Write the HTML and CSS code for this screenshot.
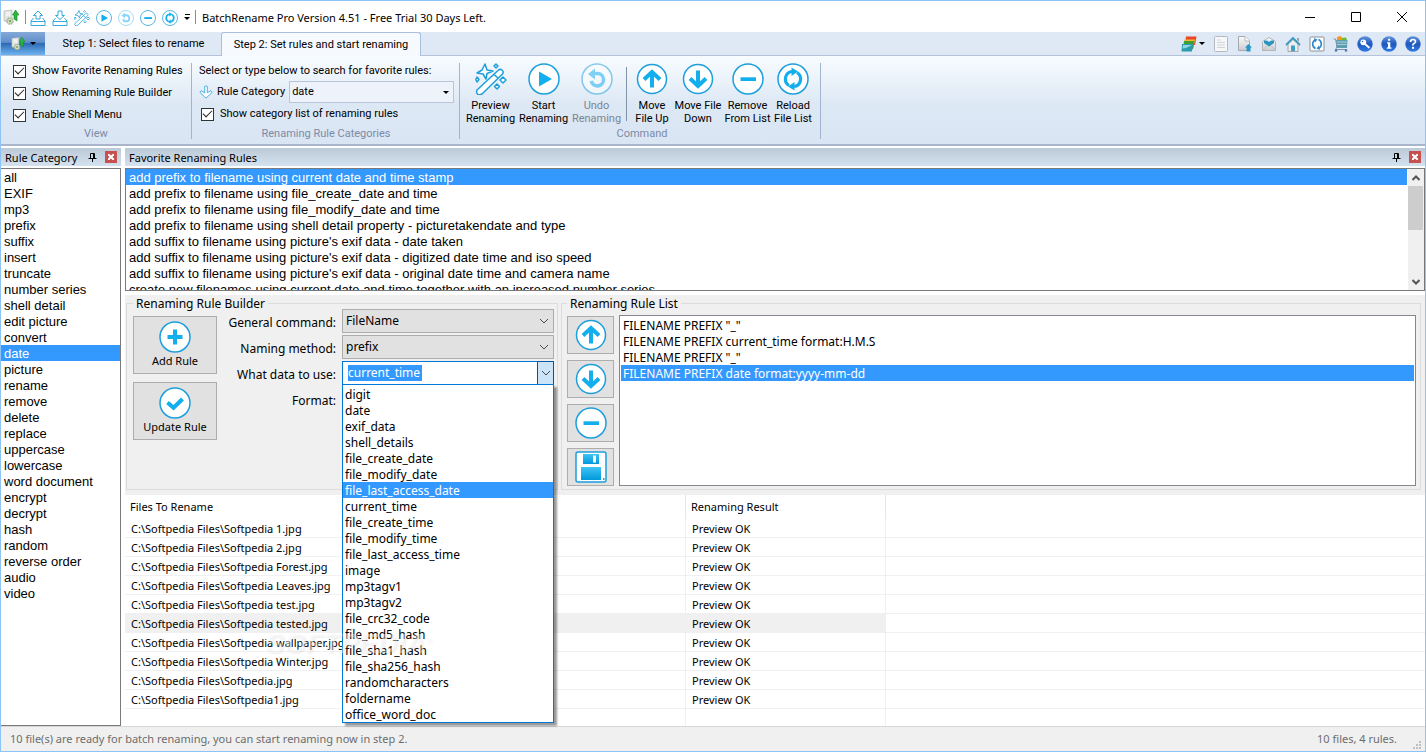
FILE: index.html
```html
<!DOCTYPE html>
<html lang="en">
<head>
  <meta charset="UTF-8" />
  <meta name="viewport" content="width=device-width, initial-scale=1.0" />
  <title>BatchRename Pro Version 4.51</title>
  <link rel="stylesheet" href="styles.css">
</head>
<body>
  <svg class="sprite" width="0" height="0" aria-hidden="true">
    <defs>
      <linearGradient id="g-sky" x1="0" y1="0" x2="0" y2="1"><stop offset="0" stop-color="#3fc4f5" /><stop offset="1" stop-color="#0098dc" /></linearGradient>
      <linearGradient id="g-blue" x1="0" y1="0" x2="0" y2="1"><stop offset="0" stop-color="#5f93dd" /><stop offset="0.5" stop-color="#1f58bd" /><stop offset="1" stop-color="#2f7be8" /></linearGradient>
      <linearGradient id="g-grey" x1="0" y1="0" x2="0" y2="1"><stop offset="0" stop-color="#fbfbfb" /><stop offset="1" stop-color="#c9ccd0" /></linearGradient>
    </defs>
    <symbol id="i-play" viewBox="0 0 32 32"><circle cx="16" cy="16" r="15" fill="#fff" stroke="#1d9fdc" stroke-width="1.5" /><path d="M11 8.500L24 16L11 23.500Z" fill="#12aeee" /></symbol>
    <symbol id="i-undo" viewBox="0 0 32 32"><circle cx="16" cy="16" r="15" fill="#fff" stroke="#1d9fdc" stroke-width="1.500" /><path d="M12.500 10.500H16.500A6.200 6.200 0 1 1 10.300 18" fill="none" stroke="#12aeee" stroke-width="3.600" /><path d="M7 11L14 5.500V16.500Z" fill="#12aeee" /></symbol>
    <symbol id="i-minus" viewBox="0 0 32 32"><circle cx="16" cy="16" r="15" fill="#fff" stroke="#1d9fdc" stroke-width="1.500" /><path d="M8.500 14.300H24V18H8.500Z" fill="#12aeee" /></symbol>
    <symbol id="i-plus" viewBox="0 0 32 32"><circle cx="16" cy="16" r="15" fill="#fff" stroke="#1d9fdc" stroke-width="1.500" /><path d="M14 8.500H18V14H23.500V18H18V23.500H14V18H8.500V14H14Z" fill="#12aeee" /></symbol>
    <symbol id="i-check" viewBox="0 0 32 32"><circle cx="16" cy="16" r="15" fill="#fff" stroke="#1d9fdc" stroke-width="1.500" /><path d="M8.500 15.500L14.500 20.800L23.500 12" fill="none" stroke="#12aeee" stroke-width="4" /></symbol>
    <symbol id="i-up" viewBox="0 0 32 32"><circle cx="16" cy="16" r="14.500" fill="#fff" stroke="#1d9fdc" stroke-width="1.500" /><path d="M16 24.500V10M8 16.500L16 9L24 16.500" fill="none" stroke="#12aeee" stroke-width="4" /></symbol>
    <symbol id="i-down" viewBox="0 0 32 32"><circle cx="16" cy="16" r="14.500" fill="#fff" stroke="#1d9fdc" stroke-width="1.500" /><path d="M16 7.500V22M8 15.500L16 23L24 15.500" fill="none" stroke="#12aeee" stroke-width="4" /></symbol>
    <symbol id="i-reload" viewBox="0 0 32 32"><circle cx="16" cy="16" r="15" fill="#fff" stroke="#1d9fdc" stroke-width="1.500" /><path d="M12 22.500A7.600 7.600 0 0 1 15 8.500M20 9.500A7.600 7.600 0 0 1 17 23.500" fill="none" stroke="#12aeee" stroke-width="3.200" /><path d="M14.500 4.500L21 8.500L14.500 13ZM17.500 19L11 23.500L17.500 27.500Z" fill="#12aeee" /></symbol>
    <symbol id="i-wand" viewBox="0 0 32 32">
      <g fill="#fff" stroke="#1d9fdc" stroke-width="1.500" stroke-linejoin="round">
        <path d="M2 27L23 7.500Q25 5.500 27 7T27.500 11L7 31Q4 32.500 2.500 31T2 27ZM19 11.500L23.500 15.500" />
        <path d="M10 1L12 7L18 8L12 10.500L11 16L8 11L2 10L7 7Z" />
        <path d="M21 1L23 3L21 5L19 3ZM2 14L4 16.500L2 19L0.800 16.500ZM28 14L31 17L28 20L25 17ZM22 21L24.500 23.500L22 26L19.500 23.500Z" />
      </g>
    </symbol>
    <symbol id="i-tray-up" viewBox="0 0 16 16"><path d="M3.500 8L1 11V15.500H15V11L12.500 8M1 11.500H15M8 1L3.500 5.500H6V9H10V5.500H12.500Z" fill="#fff" stroke="#35a8de" stroke-linejoin="round" /></symbol>
    <symbol id="i-tray-down" viewBox="0 0 16 16"><path d="M3.500 8L1 11V15.500H15V11L12.500 8M1 11.500H15M8 9.500L3.500 5.500H6V1H10V5.500H12.500Z" fill="#fff" stroke="#35a8de" stroke-linejoin="round" /></symbol>
    <symbol id="i-hollow-down" viewBox="0 0 16 16"><path d="M8 15L1 8.500L2.500 6.500L6.500 9V1.500Q8 0.500 9.500 1.500V9L13.500 6.500L15 8.500Z" fill="#fff" stroke="#35a8de" stroke-linejoin="round" /></symbol>
    <symbol id="i-save" viewBox="0 0 32 32"><rect x="1" y="1" width="30" height="30" rx="2" fill="#fff" stroke="#1d9fdc" stroke-width="1.500" /><path d="M8 3H24V13H8Z" fill="url(#g-sky)" /><path d="M18 4.500H21V11.500H18Z" fill="#fff" /><rect x="6" y="16" width="20" height="13" fill="url(#g-sky)" /><path d="M28 27H29.500V29H28Z" fill="#1d9fdc" /></symbol>
    <symbol id="i-app" viewBox="0 0 16 16"><path d="M1 2L9 1V14L1 12Z" fill="#e3e6e4" stroke="#a9adaa" stroke-width="0.600" /><path d="M3 4H7M3 6H7" stroke="#fff" /><circle cx="7" cy="12" r="3" fill="#d8e4c9" stroke="#9bb18b" stroke-width="1.500" stroke-dasharray="1.600 0.700" /><circle cx="7" cy="12" r="1.200" fill="#7aa35f" /><path d="M12.500 1L16 6H14V12L11 10V6H9.500Z" fill="#28b93a" stroke="#13822a" stroke-width="0.600" /></symbol>
    <symbol id="i-pin" viewBox="0 0 9 9"><path d="M2.500 0.500H6.500V5.500H2.500ZM5.500 0.500V5.500M0.500 5.500H8.500M4.500 5.500V9" fill="none" stroke="#000" /></symbol>
    <symbol id="i-chevron" viewBox="0 0 10 10"><path d="M1 3L5 7L9 3" fill="none" stroke="#4a4a4a" /></symbol>
    <symbol id="i-layers" viewBox="0 0 16 16"><path d="M5 0.500H15.500L14 9H4Z" fill="#e8472b" /><path d="M3.500 3.500H14L12.500 12H2.500Z" fill="#f2b632" /><path d="M3 5H13.500L12 13H2Z" fill="#3e9f35" /><path d="M1 8H12L11 15.500H0.500Z" fill="#2b9cae" /><path d="M2 9H11L5 12L1.500 12.500Z" fill="#8ed6e0" /></symbol>
    <symbol id="i-sheet" viewBox="0 0 16 16"><rect x="1.500" y="0.500" width="13" height="15" rx="1" fill="#f6f7f8" stroke="#b5bac0" /><path d="M4 4H8M4 6.500H12M4 9H12M4 11.500H12" stroke="#ced5dc" /></symbol>
    <symbol id="i-export" viewBox="0 0 16 16"><path d="M1.500 0.500H8L12.500 5V14.500H1.500Z" fill="url(#g-grey)" stroke="#a6a9ad" /><path d="M8 0.500V5H12.500" fill="#fff" stroke="#b6b9bc" /><path d="M11.500 8L15 11.500H13.500V15.500H9.500V11.500H8Z" fill="#2597c9" /></symbol>
    <symbol id="i-mail" viewBox="0 0 16 16"><path d="M1.500 5.500L8 1.500L14.500 5.500V14.500H1.500Z" fill="url(#g-grey)" stroke="#b3b5b8" /><path d="M3 4.500H13V7L8 10.500L3 7Z" fill="#2b93c0" /><path d="M5 4H11L8 6Z" fill="#d6edf7" /><path d="M2 14L6 9.500M14 14L10 9.500" stroke="#b5b8bb" stroke-width="0.700" /></symbol>
    <symbol id="i-home" viewBox="0 0 16 16"><path d="M3 8L8 3.500L13 8V15.500H3Z" fill="#eceef0" stroke="#a2a6aa" /><path d="M6 9.500H10V15H6Z" fill="#3ea0c8" /><path d="M1 9L8 2L15 9" fill="none" stroke="#3b9ac2" stroke-width="1.800" /><path d="M12 2H14V6L12 4Z" fill="#9ca2a8" /></symbol>
    <symbol id="i-refresh" viewBox="0 0 16 16"><rect x="1" y="1" width="14" height="14" rx="1" fill="#fff" stroke="#8c9299" /><path d="M6.500 12.500A4.800 4.800 0 0 1 6 4M9.500 3.500A4.800 4.800 0 0 1 10 12" fill="none" stroke="#2f86cc" stroke-width="1.600" /><path d="M5 2L8.500 3.500L6 6.500ZM11 14L7.500 12.500L10 9.500Z" fill="#2f86cc" /></symbol>
    <symbol id="i-cart" viewBox="0 0 16 16"><path d="M4 1L7 0L9 1V4H4Z" fill="#f59a18" /><path d="M9 2L13 1.500L14 4H9Z" fill="#69bd30" /><path d="M3 4H14.500L14 12H3.500Z" fill="#5d9fae" /><path d="M3.500 6H14M4 8.500H13.500" stroke="#a6d1d8" /><path d="M0.500 3H2.500L4 11L2.500 13.500H14" fill="none" stroke="#7c93ab" /><circle cx="3" cy="14.500" r="1.300" fill="#547bb0" /><circle cx="13" cy="14.500" r="1.300" fill="#547bb0" /></symbol>
    <symbol id="i-key" viewBox="0 0 16 16"><circle cx="8" cy="8" r="7.700" fill="url(#g-blue)" /><circle cx="6.300" cy="6.300" r="2.900" fill="#fff" /><circle cx="5.500" cy="5.500" r="0.800" fill="#2a5fb8" /><path d="M8 8L12.500 12" stroke="#fff" stroke-width="1.800" /></symbol>
    <symbol id="i-info" viewBox="0 0 16 16"><circle cx="8" cy="8" r="7.700" fill="url(#g-blue)" /><path d="M7 2.700H9.200V4.700H7ZM6 6.200H9.300V11.500H10.500V12.800H5.800V11.500H7V7.500H6Z" fill="#fff" /></symbol>
    <symbol id="i-help" viewBox="0 0 16 16"><circle cx="8" cy="8" r="7.700" fill="url(#g-blue)" /><path d="M5.500 6Q5.500 3.500 8 3.500T10.500 5.500Q10.500 6.800 9 7.500T8 9.500" fill="none" stroke="#fff" stroke-width="1.700" /><path d="M7 10.800H9.100V12.800H7Z" fill="#fff" /></symbol>
  </svg>

  <div class="window">
    <header class="titlebar">
      <svg class="app-icon"><use href="#i-app" /></svg>
      <span class="bar-line"></span>
      <div class="quick">
        <button aria-label="Add files"><svg><use href="#i-tray-up" /></svg></button>
        <button aria-label="Add folder"><svg><use href="#i-tray-down" /></svg></button>
        <button aria-label="Preview"><svg><use href="#i-wand" /></svg></button>
        <button aria-label="Start"><svg><use href="#i-play" /></svg></button>
        <button aria-label="Undo" disabled><svg><use href="#i-undo" /></svg></button>
        <button aria-label="Remove"><svg><use href="#i-minus" /></svg></button>
        <button aria-label="Reload"><svg><use href="#i-reload" /></svg></button>
      </div>
      <button class="more" aria-label="Customize toolbar"><span class="more-bar"></span><span class="arrow"></span></button>
      <span class="bar-line"></span>
      <h1>BatchRename Pro Version 4.51 - Free Trial 30 Days Left.</h1>
      <div class="win-buttons">
        <button aria-label="Minimize"><svg viewBox="0 0 10 10"><path d="M0 5.500H10" /></svg></button>
        <button aria-label="Maximize"><svg viewBox="0 0 10 10"><path d="M0.500 0.500H9.500V9.500H0.500Z" /></svg></button>
        <button aria-label="Close"><svg viewBox="0 0 10 10"><path d="M0 0L10 10M10 0L0 10" /></svg></button>
      </div>
    </header>

    <nav class="tabs">
      <button class="app-menu" aria-label="Application menu"><svg><use href="#i-app" /></svg><span class="arrow"></span></button>
      <button class="tab">Step 1: Select files to rename</button>
      <button class="tab active">Step 2: Set rules and start renaming</button>
      <div class="tools">
        <button class="skin" aria-label="Skins"><svg><use href="#i-layers" /></svg><span class="arrow"></span></button>
        <button aria-label="Log"><svg><use href="#i-sheet" /></svg></button>
        <button aria-label="Export"><svg><use href="#i-export" /></svg></button>
        <button aria-label="Mail"><svg><use href="#i-mail" /></svg></button>
        <button aria-label="Home"><svg><use href="#i-home" /></svg></button>
        <button aria-label="Update"><svg><use href="#i-refresh" /></svg></button>
        <button aria-label="Buy"><svg><use href="#i-cart" /></svg></button>
        <button aria-label="Register"><svg><use href="#i-key" /></svg></button>
        <button aria-label="About"><svg><use href="#i-info" /></svg></button>
        <button aria-label="Help"><svg><use href="#i-help" /></svg></button>
      </div>
    </nav>

    <section class="ribbon">
      <div class="group view">
        <div class="group-body">
          <label class="check"><input type="checkbox" checked />Show Favorite Renaming Rules</label>
          <label class="check"><input type="checkbox" checked />Show Renaming Rule Builder</label>
          <label class="check"><input type="checkbox" checked />Enable Shell Menu</label>
        </div>
        <p class="caption">View</p>
      </div>
      <div class="group categories">
        <div class="group-body">
          <p>Select or type below to search for favorite rules:</p>
          <div class="category-row">
            <svg><use href="#i-hollow-down" /></svg>
            <label for="category">Rule Category</label>
            <span class="category-box">
              <select id="category"><option>date</option></select>
              <span class="arrow"></span>
            </span>
          </div>
          <label class="check"><input type="checkbox" checked />Show category list of renaming rules</label>
        </div>
        <p class="caption">Renaming Rule Categories</p>
      </div>
      <div class="group command">
        <div class="commands">
          <button><svg><use href="#i-wand" /></svg>Preview<br>Renaming</button>
          <button><svg><use href="#i-play" /></svg>Start<br>Renaming</button>
          <button disabled><svg><use href="#i-undo" /></svg>Undo<br>Renaming</button>
          <span class="divider"></span>
          <button><svg><use href="#i-up" /></svg>Move<br>File Up</button>
          <button><svg><use href="#i-down" /></svg>Move File<br>Down</button>
          <button><svg><use href="#i-minus" /></svg>Remove<br>From List</button>
          <button><svg><use href="#i-reload" /></svg>Reload<br>File List</button>
        </div>
        <p class="caption">Command</p>
      </div>
    </section>

    <main class="workspace">
      <aside class="panel">
        <div class="panel-head">
          <h2>Rule Category</h2>
          <button class="pin" aria-label="Pin"><svg><use href="#i-pin" /></svg></button>
          <button class="close" aria-label="Close panel"><svg viewBox="0 0 6 6"><path d="M0 0L6 6M6 0L0 6" /></svg></button>
        </div>
        <ul class="list category-list">
          <li>all</li>
          <li>EXIF</li>
          <li>mp3</li>
          <li>prefix</li>
          <li>suffix</li>
          <li>insert</li>
          <li>truncate</li>
          <li>number series</li>
          <li>shell detail</li>
          <li>edit picture</li>
          <li>convert</li>
          <li class="selected">date</li>
          <li>picture</li>
          <li>rename</li>
          <li>remove</li>
          <li>delete</li>
          <li>replace</li>
          <li>uppercase</li>
          <li>lowercase</li>
          <li>word document</li>
          <li>encrypt</li>
          <li>decrypt</li>
          <li>hash</li>
          <li>random</li>
          <li>reverse order</li>
          <li>audio</li>
          <li>video</li>
        </ul>
      </aside>

      <div class="content">
        <section class="panel">
          <div class="panel-head">
            <h2>Favorite Renaming Rules</h2>
            <button class="pin" aria-label="Pin"><svg><use href="#i-pin" /></svg></button>
            <button class="close" aria-label="Close panel"><svg viewBox="0 0 6 6"><path d="M0 0L6 6M6 0L0 6" /></svg></button>
          </div>
          <div class="favorites">
            <ul class="list">
              <li class="selected">add prefix to filename using current date and time stamp</li>
              <li>add prefix to filename using file_create_date and time</li>
              <li>add prefix to filename using file_modify_date and time</li>
              <li>add prefix to filename using shell detail property - picturetakendate and type</li>
              <li>add suffix to filename using picture's exif data - date taken</li>
              <li>add suffix to filename using picture's exif data - digitized date time and iso speed</li>
              <li>add suffix to filename using picture's exif data - original date time and camera name</li>
              <li>create new filenames using current date and time together with an increased number series</li>
            </ul>
            <div class="scrollbar">
              <button aria-label="Scroll up"><svg viewBox="0 0 8 8"><path d="M0.500 6L4 2.500L7.500 6" /></svg></button>
              <span class="thumb"></span>
              <button aria-label="Scroll down"><svg viewBox="0 0 8 8"><path d="M0.500 2L4 5.500L7.500 2" /></svg></button>
            </div>
          </div>
        </section>

        <section class="rules">
          <fieldset class="builder">
            <legend>Renaming Rule Builder</legend>
            <div class="builder-body">
              <div class="rule-buttons">
                <button><svg><use href="#i-plus" /></svg>Add Rule</button>
                <button><svg><use href="#i-check" /></svg>Update Rule</button>
              </div>
              <div class="form">
                <label for="command">General command:</label>
                <span class="combo">
                  <select id="command"><option>FileName</option></select>
                  <svg><use href="#i-chevron" /></svg>
                </span>
                <label for="method">Naming method:</label>
                <span class="combo">
                  <select id="method"><option>prefix</option></select>
                  <svg><use href="#i-chevron" /></svg>
                </span>
                <label for="data">What data to use:</label>
                <div class="combo open">
                  <span class="edit"><input id="data" type="text" value="current_time" /></span>
                  <button aria-label="Show choices"><svg><use href="#i-chevron" /></svg></button>
                  <ul class="menu">
                    <li>digit</li>
                    <li>date</li>
                    <li>exif_data</li>
                    <li>shell_details</li>
                    <li>file_create_date</li>
                    <li>file_modify_date</li>
                    <li class="selected">file_last_access_date</li>
                    <li>current_time</li>
                    <li>file_create_time</li>
                    <li>file_modify_time</li>
                    <li>file_last_access_time</li>
                    <li>image</li>
                    <li>mp3tagv1</li>
                    <li>mp3tagv2</li>
                    <li>file_crc32_code</li>
                    <li>file_md5_hash</li>
                    <li>file_sha1_hash</li>
                    <li>file_sha256_hash</li>
                    <li>randomcharacters</li>
                    <li>foldername</li>
                    <li>office_word_doc</li>
                  </ul>
                </div>
                <span class="form-label">Format:</span>
              </div>
            </div>
          </fieldset>

          <fieldset class="rule-list">
            <legend>Renaming Rule List</legend>
            <div class="rule-list-body">
              <div class="list-buttons">
                <button aria-label="Move up"><svg><use href="#i-up" /></svg></button>
                <button aria-label="Move down"><svg><use href="#i-down" /></svg></button>
                <button aria-label="Remove"><svg><use href="#i-minus" /></svg></button>
                <button aria-label="Save"><svg><use href="#i-save" /></svg></button>
              </div>
              <ul class="steps">
                <li>FILENAME PREFIX "_"</li>
                <li>FILENAME PREFIX current_time format:H.M.S</li>
                <li>FILENAME PREFIX "_"</li>
                <li class="selected">FILENAME PREFIX date format:yyyy-mm-dd</li>
              </ul>
            </div>
          </fieldset>
        </section>

        <div class="files">
          <table>
            <colgroup><col class="col-name"><col class="col-result"><col></colgroup>
            <thead>
              <tr><th>Files To Rename</th><th>Renaming Result</th><th></th></tr>
            </thead>
            <tbody>
              <tr><td>C:\Softpedia Files\Softpedia 1.jpg</td><td>Preview OK</td><td></td></tr>
              <tr><td>C:\Softpedia Files\Softpedia 2.jpg</td><td>Preview OK</td><td></td></tr>
              <tr><td>C:\Softpedia Files\Softpedia Forest.jpg</td><td>Preview OK</td><td></td></tr>
              <tr><td>C:\Softpedia Files\Softpedia Leaves.jpg</td><td>Preview OK</td><td></td></tr>
              <tr><td>C:\Softpedia Files\Softpedia test.jpg</td><td>Preview OK</td><td></td></tr>
              <tr class="current"><td>C:\Softpedia Files\Softpedia tested.jpg</td><td>Preview OK</td><td></td></tr>
              <tr><td>C:\Softpedia Files\Softpedia wallpaper.jpg</td><td>Preview OK</td><td></td></tr>
              <tr><td>C:\Softpedia Files\Softpedia Winter.jpg</td><td>Preview OK</td><td></td></tr>
              <tr><td>C:\Softpedia Files\Softpedia.jpg</td><td>Preview OK</td><td></td></tr>
              <tr><td>C:\Softpedia Files\Softpedia1.jpg</td><td>Preview OK</td><td></td></tr>
              <tr class="rest"><td></td><td></td><td></td></tr>
            </tbody>
          </table>
          <span class="watermark">SOFTPEDIA<sup>®</sup></span>
        </div>
      </div>
    </main>

    <footer class="status">
      <span>10 file(s) are ready for batch renaming, you can start renaming now in step 2.</span>
      <span class="counts">10 files, 4 rules.</span>
      <svg class="grip" viewBox="0 0 8 8"><path d="M6 0H8V2H6ZM3 3H5V5H3ZM6 3H8V5H6ZM0 6H2V8H0ZM3 6H5V8H3ZM6 6H8V8H6Z" /></svg>
    </footer>
  </div>
</body>
</html>
```

FILE: styles.css
```css
* {
  box-sizing: border-box;
}
body {
  margin: 0;
  font-family: "Noto Sans", "Open Sans", sans-serif;
  font-size: 12px;
  line-height: 16px;
  color: #000;
}
h1, h2, p, ul {
  margin: 0;
  padding: 0;
  font-size: inherit;
  font-weight: normal;
}
ul {
  list-style: none;
}
button, input, select {
  margin: 0;
  padding: 0;
  border: none;
  background: none;
  font: inherit;
  color: inherit;
}
svg {
  display: block;
  flex: none;
}
.sprite {
  position: absolute;
}
.window {
  display: flex;
  flex-direction: column;
  min-height: 100vh;
  border: 1px solid #8ec3f5;
  background: #fff;
}
.arrow {
  width: 0;
  height: 0;
  border: 3px solid transparent;
  border-top: 3px solid #000;
  border-bottom: none;
}
.selected {
  background: #3399ff;
  color: #fff;
}

/* title bar */
.titlebar {
  display: flex;
  align-items: center;
  height: 31px;
  padding-left: 2px;
  font-size: 11px;
}
.titlebar .app-icon {
  width: 16px;
  height: 16px;
  margin-right: 6px;
}
.bar-line {
  width: 1px;
  height: 14px;
  background: #8c8c8c;
}
.quick {
  display: flex;
  gap: 6px;
  margin: 2px 0 0 4px;
}
.quick svg {
  width: 16px;
  height: 16px;
}
.quick button:disabled {
  opacity: 0.5;
}
.more {
  display: flex;
  flex-direction: column;
  align-items: center;
  gap: 2px;
  margin: 0 5px 0 6px;
}
.more-bar {
  width: 5px;
  height: 1px;
  background: #000;
}
.titlebar h1 {
  margin-left: 6px;
  padding-top: 2px;
}
.win-buttons {
  display: flex;
  margin-left: auto;
}
.win-buttons button {
  display: grid;
  place-items: center;
  width: 46px;
  height: 28px;
}
.win-buttons svg {
  width: 10px;
  height: 10px;
  fill: none;
  stroke: #000;
}

/* tabs */
.tabs {
  display: flex;
  height: 24px;
  border-bottom: 1px solid #b4c3d9;
  background: #dfe8f5;
  font-family: Roboto, "Liberation Sans", sans-serif;
  font-size: 11px;
}
.app-menu {
  display: flex;
  align-items: center;
  justify-content: center;
  gap: 5px;
  width: 44px;
  margin-right: 1px;
  background: linear-gradient(#84a9d8, #5f8fcb 45%, #2f6ab5 50%, #6db4f0);
}
.app-menu svg {
  width: 14px;
  height: 15px;
}
.tab {
  width: 175px;
  border: 1px solid transparent;
}
.tab.active {
  width: 200px;
  height: 24px;
  border-color: #a9bfdc;
  border-bottom: none;
  border-radius: 3px 3px 0 0;
  background: #f6faff;
}
.tools {
  display: flex;
  align-items: center;
  gap: 8px;
  margin-left: auto;
  padding-right: 4px;
}
.tools button {
  display: flex;
  align-items: center;
  gap: 3px;
}
.tools .skin {
  gap: 2px;
}
.tools svg {
  width: 16px;
  height: 16px;
}

/* ribbon */
.ribbon {
  display: flex;
  height: 90px;
  border-bottom: 2px solid #a9b5cb;
  background: linear-gradient(#f8fcff, #dde8f5 55%, #dae5f4);
  font-family: Roboto, "Liberation Sans", sans-serif;
  font-size: 11px;
  white-space: nowrap;
}
.group {
  display: flex;
  flex-direction: column;
  justify-content: space-between;
  margin: 7px 0 5px;
  border-right: 1px solid #a3b4d0;
}
.caption {
  line-height: 10px;
  color: #7b8ba6;
  text-align: center;
}
.view {
  width: 191px;
}
.view .group-body {
  padding-left: 12px;
}
.check {
  display: flex;
  align-items: center;
  gap: 6px;
  height: 16px;
  margin-bottom: 6px;
}
.check input {
  display: grid;
  place-items: center;
  appearance: none;
  width: 13px;
  height: 13px;
  border: 1px solid #333;
  background: #fff;
}
.check input:checked::after {
  content: "";
  width: 8px;
  height: 4px;
  margin-bottom: 3px;
  border: solid #222;
  border-width: 0 0 1px 1px;
  transform: rotate(-45deg);
}
.categories {
  width: 268px;
  padding: 0 6px 0 7px;
}
.category-row {
  display: flex;
  align-items: center;
  gap: 4px;
  margin: 2px 0 3px;
}
.category-row svg {
  width: 14px;
  height: 16px;
}
.category-box {
  display: flex;
  align-items: center;
  flex: none;
  width: 165px;
  height: 22px;
  margin-left: auto;
  padding-right: 4px;
  border: 1px solid #b9c6da;
  background: #eef3fb;
}
.category-box select {
  appearance: none;
  flex: 1;
  padding-left: 2px;
}
.categories .check {
  padding-left: 2px;
  margin: 0;
}
.command {
  width: 361px;
  padding-left: 4px;
}
.commands {
  display: grid;
  grid-template-columns: 53px 53px 53px 7px 44px 48px 51px 40px;
}
.commands button {
  display: block;
  line-height: 13px;
}
.commands button:disabled {
  color: #7d8590;
}
.commands button:disabled svg {
  opacity: 0.5;
}
.commands svg {
  width: 32px;
  height: 32px;
  margin: 0 auto 4px;
}
.divider {
  justify-self: center;
  width: 1px;
  height: 54px;
  margin-top: 4px;
  background: #8492a8;
}

/* docked panels */
.workspace {
  display: grid;
  grid-template-columns: 120px minmax(0, 1fr);
  gap: 4px;
  flex: 1;
  padding-top: 2px;
}
.panel {
  display: flex;
  flex-direction: column;
  gap: 2px;
}
.panel-head {
  display: flex;
  align-items: center;
  height: 18px;
  padding: 0 4px;
  background: linear-gradient(#bccad8, #d4e1ef);
  font-size: 11px;
}
.panel-head h2 {
  flex: 1;
  padding-top: 1px;
}
.panel-head .pin svg {
  width: 9px;
  height: 9px;
}
.panel-head .close {
  display: grid;
  place-items: center;
  width: 12px;
  height: 12px;
  margin-left: 8px;
  background: #c75050;
}
.close svg {
  width: 6px;
  height: 6px;
  stroke: #fff;
  stroke-width: 2;
}
.list {
  font-family: "Liberation Sans", Arial, sans-serif;
  font-size: 13px;
}
.list li, .menu li, .steps li {
  height: 16px;
  padding: 1px 0 0 3px;
  white-space: nowrap;
}
.category-list {
  flex: 1;
  border: 1px solid #7a7a7a;
  border-left: none;
}
.content {
  display: flex;
  flex-direction: column;
}
.favorites {
  display: flex;
  height: 123px;
  overflow: hidden;
  border: 1px solid #7a7a7a;
}
.favorites .list {
  flex: 1;
}
.scrollbar {
  display: flex;
  flex-direction: column;
  width: 17px;
  border-left: 1px solid #fff;
  background: #f0f0f0;
}
.scrollbar button {
  display: grid;
  place-items: center;
  height: 17px;
}
.scrollbar button:last-child {
  margin-top: auto;
}
.scrollbar svg {
  width: 8px;
  height: 8px;
  fill: none;
  stroke: #555;
  stroke-width: 2;
}
.thumb {
  height: 44px;
  margin-right: 1px;
  background: #cdcdcd;
}

/* rule builder and rule list */
.rules {
  display: grid;
  grid-template-columns: 432px minmax(0, 1fr);
  gap: 3px;
  height: 200px;
  margin-top: 4px;
  padding: 0 4px 5px 1px;
  background: #f0f0f0;
}
fieldset {
  min-width: 0;
  margin: 0;
  padding: 0 6px;
  border: 1px solid #dcdcdc;
}
legend {
  height: 17px;
  padding: 1px 3px 0;
}
.builder-body {
  display: flex;
}
.rule-buttons, .list-buttons {
  display: flex;
  flex-direction: column;
  gap: 8px;
  padding-top: 4px;
}
.rule-buttons button, .list-buttons button {
  border: 1px solid #adadad;
  background: #e1e1e1;
}
.rule-buttons button {
  width: 84px;
  height: 58px;
  font-size: 11px;
}
.rule-buttons svg, .list-buttons svg {
  width: 32px;
  height: 32px;
  margin: 0 auto;
}
.form {
  display: grid;
  grid-template-columns: 119px 212px;
  grid-auto-rows: 24px;
  gap: 2px 6px;
  margin-top: -3px;
}
.form label, .form-label {
  align-self: center;
  padding-top: 4px;
  text-align: right;
}
.combo {
  display: flex;
  align-items: center;
  padding-right: 4px;
  border: 1px solid #adadad;
  background: #e1e1e1;
}
.combo select {
  appearance: none;
  flex: 1;
  padding-left: 3px;
}
.combo svg {
  width: 10px;
  height: 10px;
}
.combo.open {
  position: relative;
  padding: 0;
  border-color: #0078d7;
  background: #fff;
}
.edit {
  flex: 1;
  padding-left: 5px;
}
.edit input {
  width: 74px;
  height: 16px;
  background: #3399ff;
  color: #fff;
  outline: none;
}
.combo.open button {
  display: grid;
  place-items: center;
  align-self: stretch;
  width: 17px;
  margin: -1px;
  border: 1px solid #00599d;
  background: #cce4f7;
}
.menu {
  position: absolute;
  z-index: 2;
  top: 100%;
  left: -1px;
  right: -1px;
  padding-top: 1px;
  border: 1px solid #0078d7;
  background: #fff;
  box-shadow: 3px 3px 2px rgba(0, 0, 0, 0.4);
}
.menu li, .steps li {
  padding-left: 2px;
}
.rule-list-body {
  display: flex;
  gap: 5px;
  padding-top: 3px;
}
.rule-list {
  padding: 0 4px 0 5px;
}
.list-buttons {
  gap: 6px;
  padding-top: 1px;
}
.list-buttons button {
  width: 47px;
  height: 38px;
}
.steps {
  flex: 1;
  padding: 1px;
  border: 1px solid #828790;
  background: #fff;
}

/* file table */
.files {
  position: relative;
  display: flex;
  flex: 1;
}
table {
  width: 100%;
  table-layout: fixed;
  border-collapse: separate;
  border-spacing: 0;
  font-size: 11px;
}
.col-name {
  width: 561px;
}
.col-result {
  width: 200px;
}
th {
  height: 24px;
  padding: 0 5px;
  border-right: 1px solid #e5e5e5;
  font-weight: normal;
  text-align: left;
}
td {
  height: 19px;
  padding: 1px 6px 0;
  border-right: 1px solid #f0f0f0;
  border-bottom: 1px solid #f0f0f0;
  white-space: nowrap;
}
th:last-child, td:last-child {
  border-right: none;
}
.current td {
  background: #f0f0f0;
}
.current td:last-child {
  background: none;
}
.rest td {
  height: auto;
  border-bottom: none;
}
.watermark {
  position: absolute;
  z-index: 3;
  top: 133px;
  left: 141px;
  font-family: "Liberation Sans", Arial, sans-serif;
  font-size: 28px;
  font-weight: bold;
  font-style: italic;
  line-height: 32px;
  color: rgba(255, 255, 255, 0.4);
  text-shadow: 1px 1px 2px rgba(0, 0, 0, 0.07);
  pointer-events: none;
}
.watermark sup {
  font-size: 8px;
  line-height: 8px;
}

/* status bar */
.status {
  display: flex;
  align-items: center;
  height: 25px;
  padding: 0 4px 0 9px;
  border-top: 1px solid #d7d7d7;
  background: #f0f0f0;
  color: #6d6d6d;
  font-size: 11px;
}
.counts {
  margin-left: auto;
}
.grip {
  align-self: flex-end;
  width: 8px;
  height: 8px;
  margin: 0 0 2px 16px;
  fill: #bfbfbf;
}
```
